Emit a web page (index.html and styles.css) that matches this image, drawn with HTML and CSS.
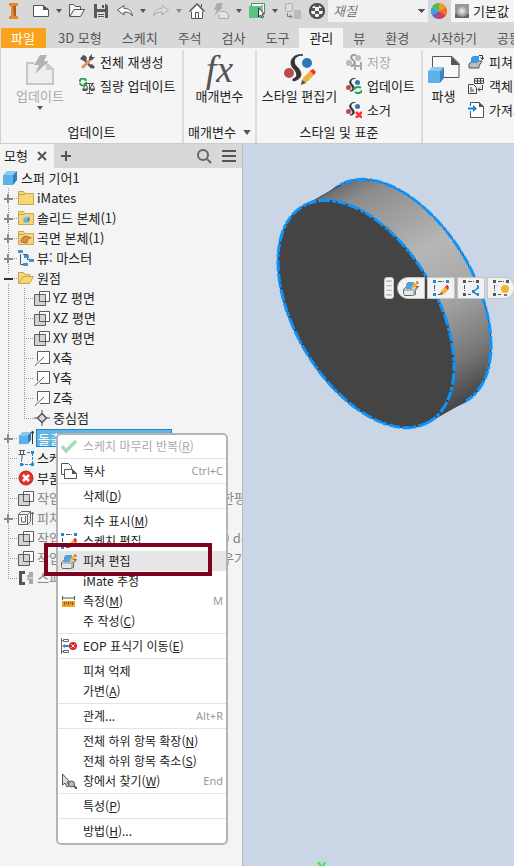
FILE: index.html
```html
<!DOCTYPE html>
<html lang="ko">
<head>
    <meta charset="UTF-8">
    <meta name="viewport" content="width=device-width, initial-scale=1.0">
    <title>스퍼 기어1</title>
    <link rel="stylesheet" href="styles.css">
</head>
<body>
    <svg class="sprite" aria-hidden="true">
        <symbol id="caret" viewBox="0 0 6 4"><path d="M0 0h6L3 4z" fill="#555"/></symbol>
        <symbol id="plane" viewBox="0 0 16 16">
            <path d="M5.500 1.500h10v10h-10z" fill="#fff" stroke="#5c5c5c"/>
            <path d="M.5 4.500h11v11H.5z" fill="#ccc" fill-opacity=".8" stroke="#5c5c5c"/>
            <path d="M5.500 4.500v7h6" fill="none" stroke="#5c5c5c"/>
        </symbol>
        <symbol id="axis" viewBox="0 0 16 16">
            <path d="M3.500 11V1.500h12v12H6" fill="#fff" stroke="#5c5c5c"/>
            <path d="M.5 16L10 7" stroke="#5c5c5c"/>
        </symbol>
        <symbol id="folder" viewBox="0 0 16 16">
            <path d="M.5 14.500v-13h5l1.500 2h8.500v11z" fill="#f7d774" stroke="#c9a54b"/>
            <path d="M1 4.500h5.500l1-1" fill="none" stroke="#c9a54b"/>
        </symbol>
        <symbol id="cube" viewBox="0 0 16 16">
            <path d="M1 5l4-4h10l-4 4z" fill="#8cc9f2"/>
            <path d="M1 5h10v10H1z" fill="#5fb0e6"/>
            <path d="M11 5l4-4v9l-4 5z" fill="#2f81b9"/>
        </symbol>
        <symbol id="sketch" viewBox="0 0 16 16">
            <path d="M5 1.500h6M1.500 5v6M14.500 5v2M5 14.500h2" fill="none" stroke="#555" stroke-dasharray="4 1"/>
            <path d="M0 0h3v3H0zM13 0h3v3h-3zM0 13h3v3H0z" fill="#1a8ad4"/>
        </symbol>
        <symbol id="pencil" viewBox="0 0 16 16">
            <path d="M7 15l1-4 5-5 3 3-5 5z" fill="#f5b335"/>
            <path d="M12 7l2-2 2 2-1 3z" fill="#e33"/>
            <path d="M7 15l1-3 2 2z" fill="#555"/>
        </symbol>
        <symbol id="feature" viewBox="0 0 16 16">
            <path d="M.5 9.500l3-3h12l-3 4v4l-3 1h-8l-1-2z" fill="#e8e8e8" stroke="#666"/>
            <path d="M1 10h10l3-3M11 10v5" fill="none" stroke="#888"/>
            <path d="M3 4l2-2h6v5L9 9H3z" fill="#4fa3dc"/>
            <path d="M8 8l1-2 4-4 2 2-4 4z" fill="#f5b335"/>
            <path d="M13 2l1-1 2 2-1 1z" fill="#f33"/>
        </symbol>
        <symbol id="style" viewBox="0 0 32 32">
            <path d="M19 1C11 1 8 7 12 12C18 17 20 25 9 27L9 25C15 23 13 18 9 14C4 8 9-1 19 1z" fill="#333" stroke="#333"/>
            <circle cx="23" cy="9" r="5" fill="#2c78b5"/>
            <circle cx="5" cy="19" r="5" fill="#b94a4d"/>
        </symbol>
        <symbol id="update" viewBox="0 0 28 30">
            <path d="M8 8H1v21h26V14l-7-6" fill="#efefef" stroke="#b9b9b9" stroke-width="1.500"/>
            <path d="M20 8v7h7" fill="#ccc"/>
            <path d="M14 0h7l-3 6h5L9 19l4-9H8z" fill="#b3b3b3"/>
        </symbol>
    </svg>

    <div class="app">
        <header class="quick-access">
            <div class="quick-icons">
                <button class="logo" aria-label="Inventor"><svg width="16" height="16" viewBox="0 0 16 16"><path d="M4 0h9v3h-2v10h2v3H4v-3h2V3H4z" fill="#e2882c"/><path d="M8 3h3v10H9z" fill="#b25d14"/></svg></button>
                <button aria-label="새로 만들기"><svg width="16" height="16" viewBox="0 0 16 16"><path d="M.5 2.500H10l5.500 4v7H.5z" fill="#fff" stroke="#555"/><path d="M10 2v5h6z" fill="#555"/></svg></button>
                <button class="drop" aria-label="새로 만들기 옵션"><svg width="6" height="4"><use href="#caret"/></svg></button>
                <button aria-label="열기"><svg width="16" height="16" viewBox="0 0 16 16"><path d="M.5 13.500v-12h4l2 2h5v3M1 13.500l4-7h10.500l-4 7z" fill="#f2f2f2" stroke="#555"/></svg></button>
                <button aria-label="저장"><svg width="16" height="16" viewBox="0 0 16 16"><path d="M1 1h12l2 2v12H1z" fill="#595959"/><path d="M4 1h8v5H4zM4 9h8v6H4z" fill="#ddd"/><path d="M9 2h2v3H9zM5 11h6v1H5zM5 13h6v1H5z" fill="#595959"/></svg></button>
                <button aria-label="명령 취소"><svg width="16" height="16" viewBox="0 0 16 16"><path d="M.5 7L7 2.500v3c5 0 7.500 2 8.500 7.500-2-3-4-4-8.500-4v3z" fill="#fff" stroke="#555"/></svg></button>
                <button class="drop" aria-label="명령 취소 목록"><svg width="6" height="4"><use href="#caret"/></svg></button>
                <button aria-label="명령 복구"><svg width="16" height="16" viewBox="0 0 16 16"><path d="M15.500 7L9 2.500v3C4 5.500 1.500 7.500.5 13c2-3 4-4 8.500-4v3z" fill="#ddd" stroke="#aaa"/></svg></button>
                <button class="drop" aria-label="명령 복구 목록"><svg width="6" height="4" opacity=".6"><use href="#caret"/></svg></button>
                <button aria-label="홈"><svg width="16" height="16" viewBox="0 0 16 16"><path d="M2.500 8v7.500h11V8" fill="#fff" stroke="#555"/><path d="M.5 8.500L8 1l7.500 7.500" fill="#fff" stroke="#555" stroke-width="1.500"/><path d="M6.500 15V9.500h3V15M12.500 4V1" fill="none" stroke="#555"/></svg></button>
                <button aria-label="업데이트"><svg width="16" height="16" viewBox="0 0 16 16"><path d="M7 8.500h5l3.500 3v4H6V11" fill="#e3e3e3" stroke="#aaa"/><path d="M4 0h6L8 4h2L1 13l3-6H1z" fill="#aaa"/></svg></button>
                <button class="drop" aria-label="업데이트 옵션"><svg width="6" height="4"><use href="#caret"/></svg></button>
                <button aria-label="선택"><svg width="16" height="16" viewBox="0 0 16 16"><path d="M2.500 3V.5h13V10" fill="#fff" stroke="#3a9a62"/><path d="M0 3h12v12H0z" fill="#5ac47e"/><path d="M13 2v9" stroke="#555"/><path d="M9.500 5v9l2-2 1.500 3 1.500-1-1.500-3h2.500z" fill="#fff" stroke="#333"/></svg></button>
                <button class="drop" aria-label="선택 옵션"><svg width="6" height="4"><use href="#caret"/></svg></button>
                <button aria-label="링크"><svg width="16" height="16" viewBox="0 0 16 16"><rect x=".5" y=".5" width="7" height="8" rx="2" fill="#ddd" stroke="#aaa"/><path d="M9 7h7v9H9z" fill="#bbb"/><path d="M2.500 10v3.500H7m-2-2l2 2-2 2" fill="none" stroke="#777"/></svg></button>
                <button aria-label="재질 찾아보기"><svg width="16" height="16" viewBox="0 0 16 16"><circle cx="8" cy="8" r="7" fill="#f2f2f2" stroke="#444" stroke-width="2"/><path d="M6 1h4v3H6zM2 5h4v3H2zM10 5h4v3h-4zM6 8h4v3H6zM2 11h4v3H2zM10 11h4v3h-4zM6 14h4v2H6z" fill="#555"/></svg></button>
            </div>
            <select class="material" aria-label="재질"><option>재질</option></select>
            <button class="wheel" aria-label="모양"><svg width="16" height="16" viewBox="-8 -8 16 16"><path d="M0 0V-8A8 8 0 0 1 7-4z" fill="#e8a020"/><path d="M0 0l7-4a8 8 0 0 1 0 8z" fill="#f37021"/><path d="M0 0l7 4A8 8 0 0 1 0 8z" fill="#e03e3e"/><path d="M0 0v8a8 8 0 0 1-7-4z" fill="#7c57c2"/><path d="M0 0l-7 4a8 8 0 0 1 0-8z" fill="#2da8e0"/><path d="M0 0l-7-4A8 8 0 0 1 0-8z" fill="#58b947"/></svg></button>
            <button class="appearance"><svg width="14" height="14" viewBox="0 0 14 14"><defs><radialGradient id="ball"><stop offset="0" stop-color="#f4f4f4"/><stop offset="1" stop-color="#8a8a8a"/></radialGradient></defs><path d="M0 0h14v14H0z" fill="#999"/><path d="M0 10h14v4H0z" fill="#666"/><circle cx="7" cy="7" r="6" fill="url(#ball)"/></svg>기본값</button>
        </header>

        <nav class="tabs">
            <a class="file" href="#">파일</a>
            <a href="#">3D 모형</a>
            <a href="#">스케치</a>
            <a href="#">주석</a>
            <a href="#">검사</a>
            <a href="#">도구</a>
            <a class="active" href="#">관리</a>
            <a href="#">뷰</a>
            <a href="#">환경</a>
            <a href="#">시작하기</a>
            <a href="#">공동</a>
        </nav>

        <div class="ribbon">
            <section class="group group-update">
                <div class="tools">
                    <button class="big disabled"><svg width="28" height="30"><use href="#update"/></svg><span>업데이트</span><svg width="6" height="4"><use href="#caret"/></svg></button>
                    <div class="stack">
                        <button><svg width="16" height="16" viewBox="0 0 16 16"><path d="M3 3l10 11" stroke="#555" stroke-width="2.500"/><path d="M13 4L3 14" stroke="#e39262" stroke-width="3"/><path d="M1 5l3-4 3 1 1 3-3 2zM10 3l3-3v3h3l-3 3h-3zM11 11l3 4 2-2-3-3z" fill="#555"/></svg>전체 재생성</button>
                        <button><svg width="16" height="16" viewBox="0 0 16 16"><path d="M5 5.500h10M10.500 5v10M7 15.500h7M7 6l-3 5h5zM13 6l-2 5h5z" fill="none" stroke="#555"/><path d="M3 11h6l-1 2H4zM11 11h5l-1 2h-3z" fill="#555"/><path d="M1 4a3 3 0 0 1 6-1M7 4a3 3 0 0 1-6 1" fill="none" stroke="#22a652" stroke-width="2"/></svg>질량 업데이트</button>
                    </div>
                </div>
                <h2>업데이트</h2>
            </section>
            <section class="group group-param">
                <div class="tools">
                    <button class="big"><span class="fx">fx</span><span>매개변수</span></button>
                </div>
                <h2>매개변수 <svg width="8" height="5"><use href="#caret"/></svg></h2>
            </section>
            <section class="group group-style">
                <div class="tools">
                    <button class="big"><svg width="32" height="32" viewBox="0 0 32 32"><use href="#style" width="32" height="32"/><path d="M17 30l2-6 8-8 4 4-8 8z" fill="#f0b040"/><path d="M26 17l3-2 3 3-2 3z" fill="#f03030"/><path d="M17 31l1-5 4 3z" fill="#555"/></svg><span>스타일 편집기</span></button>
                    <div class="stack">
                        <button class="disabled"><svg width="16" height="16" viewBox="0 0 16 16"><path d="M10 1C5 0 4 4 7 6s1 6-2 6" fill="none" stroke="#999" stroke-width="2"/><circle cx="12" cy="4" r="3" fill="#bbb"/><circle cx="3" cy="9" r="3" fill="#bbb"/><path d="M8 8h8v8H8z" fill="#aaa"/><path d="M10 8h4v3h-4zM10 13h4v3h-4z" fill="#f4f4f4"/></svg>저장</button>
                        <button><svg width="16" height="16" viewBox="0 0 16 16"><use href="#style" width="16" height="16"/><path d="M8 12a4 3 0 0 1 7-2M16 12a4 3 0 0 1-7 2" fill="none" stroke="#22a652" stroke-width="2"/></svg>업데이트</button>
                        <button><svg width="16" height="16" viewBox="0 0 16 16"><use href="#style" width="16" height="16"/><path d="M10 10l6 6M16 10l-6 6" stroke="#f33" stroke-width="2.500"/></svg>소거</button>
                    </div>
                </div>
                <h2>스타일 및 표준</h2>
            </section>
            <section class="group group-insert">
                <div class="tools">
                    <button class="big"><svg width="32" height="30" viewBox="0 0 32 30"><path d="M4.500 14V1.500H24l7 7v14H16" fill="#f8f8f8" stroke="#555"/><path d="M23 1v9h9z" fill="#555"/><path d="M0 16l4-4h12l-4 4z" fill="#8cc9f2"/><path d="M0 16h12v12H0z" fill="#5fb0e6"/><path d="M12 16l4-4v11l-4 5z" fill="#3a86bd"/></svg><span>파생</span></button>
                    <div class="stack">
                        <button><svg width="16" height="16" viewBox="0 0 16 16"><path d="M1 10l3-3h10l-3 5v2H1z" fill="#bbb" stroke="#555"/><path d="M3 4l2-2h6v5L9 9H3z" fill="#3f9be0"/><path d="M11 1.500h3.500V5m-2-1.500l2 2 1.500-2" fill="none" stroke="#333"/></svg>피쳐</button>
                        <button><svg width="16" height="16" viewBox="0 0 16 16"><path d="M6.500.5h9v5h-9zM6 3h10M9.500 1v5M12.500 1v5M.5 6.500h5l3 3v6h-8zM3 9v5M5 11v3M14.500 7v4.500H10m2-2l-2 2 2 2" fill="none" stroke="#444"/></svg>객체</button>
                        <button><svg width="16" height="16" viewBox="0 0 16 16"><path d="M2.500 4V.5H11l4.500 4v11h-13V9" fill="#fff" stroke="#555"/><path d="M11 0v5h5z" fill="#555"/><path d="M0 5.500h5V3l4 3.500L5 10V7.500H0z" fill="#1583dc"/></svg>가져오기</button>
                    </div>
                </div>
            </section>
        </div>

        <main class="workspace">
            <aside class="browser">
                <div class="browser-head">
                    <div class="browser-tab">모형 <button aria-label="닫기"><svg width="10" height="10" viewBox="0 0 10 10"><path d="M1 1l8 8M9 1L1 9" stroke="#555" stroke-width="2"/></svg></button></div>
                    <button aria-label="추가"><svg width="10" height="10" viewBox="0 0 10 10"><path d="M5 0v10M0 5h10" stroke="#555" stroke-width="2"/></svg></button>
                    <button class="search" aria-label="검색"><svg width="15" height="15" viewBox="0 0 15 15"><circle cx="6" cy="6" r="5" fill="none" stroke="#666" stroke-width="2"/><path d="M10 10l4 4" stroke="#666" stroke-width="2"/></svg></button>
                    <button aria-label="메뉴"><svg width="14" height="12" viewBox="0 0 14 12"><path d="M0 1h14M0 6h14M0 11h14" stroke="#555" stroke-width="2"/></svg></button>
                </div>
                <ul class="tree">
                    <li class="root"><svg><use href="#cube"/></svg>스퍼 기어1</li>
                    <li><i class="branch plus"></i><svg><use href="#folder"/></svg>iMates</li>
                    <li><i class="branch plus"></i><svg viewBox="0 0 16 16"><use href="#folder" width="16" height="16"/><use href="#cube" x="5" y="6" width="7" height="7"/></svg>솔리드 본체(1)</li>
                    <li><i class="branch plus"></i><svg viewBox="0 0 16 16"><use href="#folder" width="16" height="16"/><path d="M3 12c0-4 2-5 5-6l5 2c-3 0-4 2-4 5z" fill="#dd8a55" stroke="#b5653a"/></svg>곡면 본체(1)</li>
                    <li><i class="branch plus"></i><svg viewBox="0 0 16 16"><path d="M2.500 4v10.500H5M5 4.500h4.500v5H11" fill="none" stroke="#555"/><path d="M0 0h5v3H0zM6 5h5v3H6zM11 9h5v3h-5zM5 13h5v3H5z" fill="#3f95d2"/></svg>뷰: 마스터</li>
                    <li><i class="branch minus"></i><svg viewBox="0 0 16 16"><path d="M.5 13.500v-11h5l1.500 2h5v3" fill="#f7d774" stroke="#c9a54b"/><path d="M1 13.500l4-7h10.500l-4 7z" fill="#f7d774" stroke="#c9a54b"/></svg>원점</li>
                    <li><i class="branch through"></i><i class="branch sub"></i><svg><use href="#plane"/></svg>YZ 평면</li>
                    <li><i class="branch through"></i><i class="branch sub"></i><svg><use href="#plane"/></svg>XZ 평면</li>
                    <li><i class="branch through"></i><i class="branch sub"></i><svg><use href="#plane"/></svg>XY 평면</li>
                    <li><i class="branch through"></i><i class="branch sub"></i><svg><use href="#axis"/></svg>X축</li>
                    <li><i class="branch through"></i><i class="branch sub"></i><svg><use href="#axis"/></svg>Y축</li>
                    <li><i class="branch through"></i><i class="branch sub"></i><svg><use href="#axis"/></svg>Z축</li>
                    <li><i class="branch through"></i><i class="branch sub end"></i><svg viewBox="0 0 16 16"><path d="M8 0v16M0 8h16" stroke="#555"/><path d="M8 3.500L12.500 8 8 12.500 3.500 8z" fill="#ddd" stroke="#555" stroke-width="1.500"/></svg>중심점</li>
                    <li><i class="branch plus"></i><svg viewBox="0 0 16 16"><use href="#cube" width="14" height="16"/><path d="M14.500 2v12M13 3.500L14.500 1 16 3.500" fill="none" stroke="#333"/></svg><span class="selected">돌출1(새 솔리드 x 1 in)</span></li>
                    <li><i class="branch"></i><svg viewBox="0 0 16 16"><path d="M3 14.500h11M14.500 3v11M3.500 9v6M9 2.500h5" stroke="#1a8ad4" stroke-dasharray="3 1"/><path d="M2 13h3v3H2zM13 13h3v3h-3zM13 1h3v3h-3z" fill="#1a8ad4"/><path d="M1 .5h6M2.500 1v3M5.500 1v3M.5 4.500h7M4 5v4" fill="none" stroke="#555"/></svg>스케치</li>
                    <li><i class="branch"></i><svg viewBox="0 0 16 16"><circle cx="8" cy="8" r="7" fill="#e5322f" stroke="#b51f1f"/><path d="M5 5l6 6M11 5l-6 6" stroke="#fff" stroke-width="2.500"/></svg>부품</li>
                    <li class="faded"><i class="branch"></i><svg><use href="#plane"/></svg>작업<span class="tail">한평</span></li>
                    <li class="faded"><i class="branch plus"></i><svg viewBox="0 0 16 16"><path d="M.5 4.500l3-3h9v10l-3 3h-9zM.5 4.500h9l3-3M9.500 4.500v10M3.500 7v5h4V6M14.500 3v12M13 4l1.500-2L16 4" fill="none" stroke="#666"/></svg>피쳐</li>
                    <li class="faded"><i class="branch"></i><svg><use href="#plane"/></svg>작업<span class="tail">0 de</span></li>
                    <li class="faded"><i class="branch"></i><svg><use href="#plane"/></svg>작업<span class="tail">우기</span></li>
                    <li class="faded"><i class="branch end"></i><svg viewBox="0 0 16 16"><path d="M1 1h6v3H4v8h3v3H1z" fill="#555"/><path d="M15 2h-4v3H9v5h2v4h4z" fill="#aaa"/><path d="M8 8h8" stroke="#eee"/></svg>스퍼</li>
                </ul>

                <ul class="menu">
                    <li class="disabled"><button><svg viewBox="0 0 16 16"><path d="M1 8l4 5L15 3" fill="none" stroke="#a5dcb5" stroke-width="3.500"/></svg><span>스케치 마무리 반복(<u>R</u>)</span></button></li>
                    <li class="line"></li>
                    <li><button><svg viewBox="0 0 16 16"><path d="M.5.5h7l3 3v8H.5z" fill="#fff" stroke="#555"/><path d="M3.500 6.500h8l4 4v5h-12z" fill="#fff" stroke="#555"/><path d="M11 6v5h5z" fill="#555"/></svg><span>복사</span><kbd>Ctrl+C</kbd></button></li>
                    <li class="line"></li>
                    <li><button><svg></svg><span>삭제(<u>D</u>)</span></button></li>
                    <li class="line"></li>
                    <li><button><svg></svg><span>치수 표시(<u>M</u>)</span></button></li>
                    <li><button><svg viewBox="0 0 16 16"><use href="#sketch" width="16" height="16"/><use href="#pencil" width="16" height="16"/></svg><span>스케치 편집</span></button></li>
                    <li class="current"><button><svg viewBox="0 0 16 16"><use href="#feature" width="16" height="16"/></svg><span>피쳐 편집</span></button></li>
                    <li><button><svg></svg><span>iMate 추정</span></button></li>
                    <li><button><svg viewBox="0 0 16 16"><path d="M1.500 3v4M13.500 3v4M2 5h11" stroke="#555"/><path d="M1 8h13v6H1z" fill="#f0a020"/><path d="M3.500 9v3M5.500 9v2M7.500 9v3M9.500 9v2M11.500 9v3" stroke="#8a5a10"/></svg><span>측정(<u>M</u>)</span><kbd>M</kbd></button></li>
                    <li><button><svg></svg><span>주 작성(<u>C</u>)</span></button></li>
                    <li class="line"></li>
                    <li><button><svg viewBox="0 0 16 16"><path d="M.5 0v16M1 2.500h1M1 13.500h1M2.500 1.500h5v2h-5zM2.500 12.500h5v2h-5z" fill="none" stroke="#666"/><path d="M1 8l3-2v1h4v2H4v1z" fill="#2b8bd0"/><circle cx="12" cy="8" r="4" fill="#dc2b2b"/><path d="M10.500 6.500l3 3M13.500 6.500l-3 3" stroke="#fff"/></svg><span>EOP 표식기 이동(<u>E</u>)</span></button></li>
                    <li class="line"></li>
                    <li><button><svg></svg><span>피쳐 억제</span></button></li>
                    <li><button><svg></svg><span>가변(<u>A</u>)</span></button></li>
                    <li class="line"></li>
                    <li><button><svg></svg><span>관계...</span><kbd>Alt+R</kbd></button></li>
                    <li class="line"></li>
                    <li><button><svg></svg><span>전체 하위 항목 확장(<u>N</u>)</span></button></li>
                    <li><button><svg></svg><span>전체 하위 항목 축소(<u>S</u>)</span></button></li>
                    <li><button><svg viewBox="0 0 16 16"><path d="M1.500 1v11l2.500-2 2 4 2-1-2-4h3z" fill="#ddd" stroke="#555"/><circle cx="10.500" cy="11" r="3" fill="#bbb" stroke="#555"/><path d="M13 13l3 3" stroke="#555" stroke-width="2"/></svg><span>창에서 찾기(<u>W</u>)</span><kbd>End</kbd></button></li>
                    <li class="line"></li>
                    <li><button><svg></svg><span>특성(<u>P</u>)</span></button></li>
                    <li class="line"></li>
                    <li><button><svg></svg><span>방법(<u>H</u>)...</span></button></li>
                </ul>
            </aside>

            <div class="canvas">
                <svg class="model" viewBox="243 144 271 300" width="271" height="300">
                    <defs>
                        <linearGradient id="side" gradientUnits="userSpaceOnUse" x1="325" y1="185" x2="453" y2="417">
                            <stop offset="0" stop-color="#606060"/>
                            <stop offset=".1" stop-color="#8c8c8c"/>
                            <stop offset=".4" stop-color="#b7b7b7"/>
                            <stop offset=".6" stop-color="#a6a6a6"/>
                            <stop offset=".82" stop-color="#777"/>
                            <stop offset="1" stop-color="#3c3c3c"/>
                        </linearGradient>
                        <clipPath id="rim">
                            <ellipse cx="403" cy="293" rx="125" ry="71" transform="rotate(59.600 403 293)"/>
                        </clipPath>
                    </defs>
                    <!-- side wall, back rim, front face -->
                    <rect x="243" y="144" width="271" height="300" fill="url(#side)" clip-path="url(#rim)"/>
                    <ellipse cx="403" cy="293" rx="125" ry="71" transform="rotate(59.600 403 293)" fill="none" stroke="#333"/>
                    <ellipse class="edge" cx="403" cy="293" rx="125" ry="71" transform="rotate(59.600 403 293)"/>
                    <path d="M304 206l37-21L466 401l-37 21z" fill="url(#side)"/>
                    <path d="M304 206l37-21M466 401l-37 21" stroke="#444"/>
                    <ellipse cx="366" cy="314" rx="125" ry="71" transform="rotate(59.600 366 314)" fill="#444" stroke="#333"/>
                    <ellipse class="edge" cx="366" cy="314" rx="125" ry="71" transform="rotate(59.600 366 314)"/>
                </svg>
                <div class="mini-toolbar">
                    <span class="grip"><svg width="5" height="14" viewBox="0 0 5 14"><path d="M0 1h5M0 5h5M0 9h5M0 13h5" stroke="#aaa"/></svg></span>
                    <button aria-label="피쳐 편집"><svg><use href="#feature"/></svg></button>
                    <button aria-label="스케치 편집"><svg viewBox="0 0 16 16"><use href="#sketch" width="16" height="16"/><use href="#pencil" width="16" height="16"/></svg></button>
                    <button aria-label="스케치 공유"><svg viewBox="0 0 16 16"><path d="M5 1.500h6M1.500 5v6M14.500 5v2M5 14.500h3" stroke="#555" stroke-dasharray="4 1"/><path d="M0 0h3v3H0zM13 0h3v3h-3zM0 13h3v3H0z" fill="#555"/><path d="M15 8l-5 4 5 3" fill="none" stroke="#1a8ad4" stroke-width="1.500"/><path d="M14 6h2v3h-2zM9 10h3v3H9zM14 13h2v3h-2z" fill="#1a8ad4"/></svg></button>
                    <button aria-label="가시성"><svg viewBox="0 0 16 16"><path d="M5 1.500h6M1.500 5v6M5 14.500h3" stroke="#555" stroke-dasharray="4 1"/><path d="M0 0h3v3H0zM13 0h3v3h-3zM0 13h3v3H0z" fill="#555"/><circle cx="12" cy="9" r="4" fill="#f5b335"/><path d="M11 14h3v2h-3z" fill="#777"/></svg></button>
                </div>
                <span class="axis-y">Y</span>
            </div>
        </main>
    </div>
</body>
</html>
```
FILE: styles.css
```css
*, *::before, *::after {
    box-sizing: border-box;
}
body {
    margin: 0;
    font-family: "Noto Sans CJK KR", sans-serif;
    font-size: 13px;
    line-height: 20px;
    color: #222;
}
button {
    display: flex;
    align-items: center;
    padding: 0;
    border: none;
    background: none;
    font: inherit;
    color: inherit;
    white-space: nowrap;
}
svg {
    display: block;
    flex: none;
}
ul {
    list-style: none;
    margin: 0;
    padding: 0;
}
.sprite {
    position: absolute;
    width: 0;
    height: 0;
}
.app {
    display: flex;
    flex-direction: column;
    height: 100vh;
    overflow: hidden;
}

/* top bar */
.quick-access {
    display: flex;
    align-items: flex-start;
    height: 28px;
    flex: none;
    background-color: #d8d8d8;
}
.quick-icons {
    display: flex;
    align-items: center;
    gap: 8px;
    height: 22px;
    padding-left: 5px;
}
.quick-icons .logo {
    width: 20px;
}
.quick-icons .drop {
    margin: 0 -1px;
}
.material {
    width: 100px;
    height: 22px;
    margin-left: 3px;
    padding: 0 5px;
    border: none;
    appearance: none;
    background: linear-gradient(to bottom left, #555 50%, transparent 50%) no-repeat 90px 9px / 4px 4px, linear-gradient(to bottom right, #555 50%, transparent 50%) no-repeat 94px 9px / 4px 4px, #f1f1f1;
    font: italic 13px/20px "Noto Sans CJK KR", sans-serif;
    color: #777;
}
.wheel {
    height: 22px;
    margin: 0 4px 0 3px;
}
.appearance {
    flex: 1;
    height: 22px;
    gap: 4px;
    padding-left: 4px;
    background-color: #f5f5f5;
}

/* ribbon */
.tabs {
    display: flex;
    flex: none;
    height: 20px;
    padding-left: 1px;
    background-color: #d8d8d8;
}
.tabs a {
    flex: none;
    padding: 0 10px;
    line-height: 19px;
    color: #555;
    text-decoration: none;
}
.tabs .file {
    width: 45px;
    margin-right: 2px;
    background-color: #faa21b;
    color: #fff;
}
.tabs .active {
    background-color: #f5f5f5;
    color: #222;
}
.ribbon {
    display: flex;
    flex: none;
    height: 96px;
    padding-top: 2px;
    background-color: #f5f5f5;
    border-left: 1px solid #d0d0d0;
    border-bottom: 1px solid #ccc;
    overflow: hidden;
}
.group {
    display: flex;
    flex: none;
    flex-direction: column;
    border-right: 2px solid #dcdcdc;
}
.group-update {
    width: 183px;
}
.group-param {
    width: 73px;
}
.group-style {
    width: 166px;
}
.group-insert {
    border: none;
}
.tools {
    display: flex;
    height: 72px;
}
.group h2 {
    display: flex;
    align-items: center;
    justify-content: center;
    gap: 7px;
    margin: 0;
    font-size: 13px;
    font-weight: normal;
    line-height: 20px;
}
.big {
    flex-direction: column;
    justify-content: flex-start;
    padding-top: 4px;
}
.big svg:first-child, .fx {
    height: 32px;
}
.group-update .big {
    width: 78px;
}
.group-param .big {
    width: 71px;
}
.group-style .big {
    width: 85px;
}
.group-insert .big {
    width: 41px;
}
.group-insert .tools, .group-style .tools {
    gap: 4px;
}
.fx {
    font: italic 38px/30px "Liberation Serif", serif;
    color: #555;
}
.stack {
    display: flex;
    flex-direction: column;
}
.stack button {
    height: 24px;
    gap: 5px;
}
.disabled {
    color: #aaa;
}

/* model browser */
.workspace {
    display: flex;
    flex: 1;
    min-height: 0;
}
.browser {
    position: relative;
    flex: none;
    width: 243px;
    background-color: #f4f4f4;
    border-right: 1px solid #bbb;
}
.browser-head {
    display: flex;
    align-items: center;
    height: 24px;
    padding-right: 6px;
    background-color: #d8d8d8;
}
.browser-tab {
    display: flex;
    align-items: center;
    gap: 9px;
    width: 54px;
    height: 24px;
    margin-right: 7px;
    padding-left: 4px;
    background-color: #f4f4f4;
}
.search {
    margin-left: auto;
    margin-right: 10px;
}
.tree li {
    display: flex;
    align-items: center;
    height: 20px;
    white-space: nowrap;
    overflow: hidden;
}
.tree svg {
    width: 16px;
    height: 16px;
    margin-right: 3px;
}
.tree .root {
    padding-left: 2px;
}
.tree .faded {
    color: #888;
}
.branch {
    display: flex;
    align-items: center;
    flex: none;
    width: 18px;
    height: 20px;
    background: repeating-linear-gradient(#999 0 1px, transparent 1px 2px) no-repeat 8px 0 / 1px 20px, repeating-linear-gradient(to right, #999 0 1px, transparent 1px 2px) no-repeat 8px 10px / 9px 1px;
}
.branch.through {
    width: 16px;
    background-size: 1px 20px, 0 0;
}
.branch.end {
    background-size: 1px 10px, 9px 1px;
}
.branch.plus::before, .branch.minus::before {
    content: "";
    width: 9px;
    height: 9px;
    margin-left: 4px;
    background: linear-gradient(#888, #888) no-repeat 0 4px / 9px 2px, linear-gradient(#888, #888) no-repeat 3px 0 / 2px 9px, #f4f4f4;
}
.branch.minus::before {
    background: linear-gradient(#333, #333) no-repeat 0 4px / 9px 2px, #f4f4f4;
}
.selected {
    width: 136px;
    height: 18px;
    margin-left: -1px;
    padding-left: 1px;
    border: 1px solid #1688cc;
    background-color: #62b5e2;
    color: #fff;
    line-height: 17px;
}
.tail {
    width: 20px;
    margin-left: auto;
}

/* context menu */
.menu {
    position: absolute;
    left: 56px;
    top: 289px;
    width: 172px;
    padding: 1px 0 2px;
    background-color: #fff;
    border: 2px solid #b4b4b4;
    border-radius: 5px;
    font-size: 12px;
}
.menu li {
    height: 20px;
}
.menu .line {
    height: 5px;
    border-bottom: 2px solid #fff;
    border-top: 2px solid #fff;
    background-color: #e4e4e4;
}
.menu button {
    width: 100%;
    height: 20px;
    padding: 0 3px;
}
.menu svg {
    width: 16px;
    height: 16px;
    margin-right: 6px;
}
.menu kbd {
    margin-left: auto;
    font: 11px/20px "Noto Sans", sans-serif;
    color: #999;
}
.menu .current {
    position: relative;
    background-color: #e6e6e6;
}
.menu .current::after {
    content: "";
    position: absolute;
    left: -14px;
    top: -8px;
    width: 168px;
    height: 33px;
    border: 4px solid #800020;
}

/* canvas */
.canvas {
    position: relative;
    flex: 1;
    overflow: hidden;
    background-color: #cad6e6;
}
.edge {
    fill: none;
    stroke: #0a95ff;
    stroke-width: 3;
    stroke-dasharray: 12 2 4 1 9 2;
}
.mini-toolbar {
    position: absolute;
    left: 141px;
    top: 133px;
    display: flex;
    gap: 2px;
}
.grip, .mini-toolbar button {
    display: flex;
    align-items: center;
    justify-content: center;
    height: 22px;
    background-color: #f2f2f2;
    border: 1px solid #c4c4c4;
}
.grip {
    width: 10px;
    margin-right: 1px;
    border-radius: 3px;
}
.mini-toolbar button {
    width: 28px;
}
.mini-toolbar svg {
    width: 16px;
    height: 16px;
}
.mini-toolbar button:nth-child(2) {
    border-radius: 11px 0 0 11px;
}
.mini-toolbar button:last-child {
    border-radius: 0 11px 11px 0;
}
.axis-y {
    position: absolute;
    left: 74px;
    bottom: -11px;
    font: bold 14px/20px "Liberation Sans", sans-serif;
    color: #2fe62f;
}
```
